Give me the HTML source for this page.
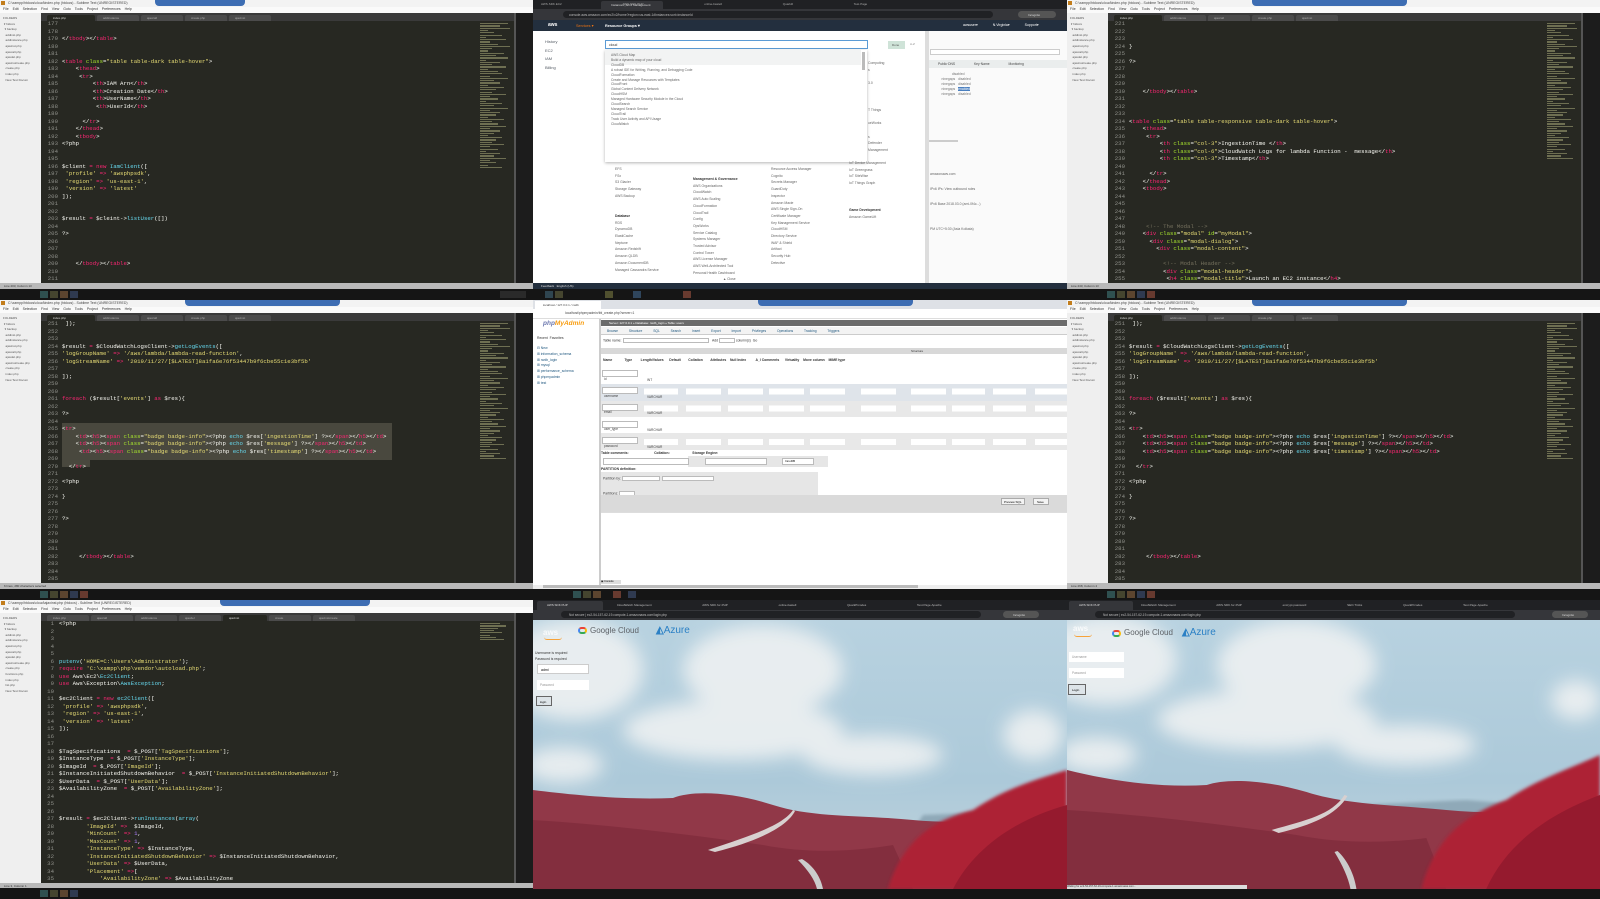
<!DOCTYPE html>
<html><head><meta charset="utf-8"><style>
*{margin:0;padding:0;box-sizing:border-box}
body{width:1600px;height:899px;background:#111;overflow:hidden;position:relative;font-family:"Liberation Sans",sans-serif}
.cell{position:absolute;overflow:hidden;background:#272822}
.a{position:absolute}
.tb{left:0;top:0;right:0;height:7px;background:#f3f3f3;font-size:3.5px;color:#444;padding:1px 0 0 8px}
.tb .ic{position:absolute;left:1px;top:1px;width:4px;height:4px;background:#c27d1c}
.blue{top:0;height:6px;background:#3d6db3;border-radius:0 0 4px 4px}
.mn{left:0;top:7px;right:0;height:6px;background:#fafafa;font-size:3.5px;color:#333;padding-left:3px;word-spacing:3px}
.sb{left:0;top:13px;width:41px;height:270px;background:#efefef;font-size:3px;color:#555;padding:3px 0 0 3px;line-height:5.6px;white-space:pre}
.tabs{left:41px;top:13px;right:0;height:8px;background:#3a3a3a}
.tab{position:absolute;top:2px;height:6px;background:#4b4b4b;border-radius:2px 2px 0 0;font-size:3px;color:#aaa;padding:1px 0 0 6px}
.tab.on{background:#272822;color:#ddd}
.gut{left:41px;top:20px;width:17px;font:5.7px/7.5px "Liberation Mono",monospace;color:#8f908a;text-align:right;white-space:pre}
.code{left:62px;top:20px;font:5.7px/7.5px "Liberation Mono",monospace;color:#f8f8f2;white-space:pre}
.mm{left:480px;top:22px;width:32px;height:255px;opacity:.55}
.mm i{display:block;height:1.2px;margin:1.1px 0;background:#a9a97a}
.rb{left:514px;top:13px;width:19px;height:277px;background:#1c1c1c;border-left:2px solid #555}
.st{left:0;top:283px;right:0;height:6px;background:#b9b9b9;font-size:3px;color:#333;padding:1px 0 0 4px}
.task{left:0;top:289px;right:0;height:11px;background:#151515}
.task b{position:absolute;top:2px;width:8px;height:7px;opacity:.7}
.k{color:#f92672}.s{color:#e6db74}.f{color:#66d9ef}.g{color:#a6e22e}.c{color:#75715e}.n{color:#ae81ff}
.t4{font-size:3.4px;color:#555;white-space:pre;line-height:5px}
</style></head><body>

<!-- R1C1 editor -->
<div class="cell" style="left:0;top:0;width:533px;height:300px">
<div class="a tb"><span class="ic"></span>C:\xampp\htdocs\cloud\index.php (htdocs) - Sublime Text (UNREGISTERED)</div>
<div class="a blue" style="left:155px;width:90px"></div>
<div class="a mn">File Edit Selection Find View Goto Tools Project Preferences Help</div>
<div class="a sb">FOLDERS
 ▾ htdocs
  ▾ backup
   addinst.php
   addinstance.php
   ajaxinst.php
   ajaxcall.php
   ajaxdel.php
   ajaxinstcreate.php
   create.php
   index.php
   New Text Docum</div>
<div class="a tabs"><div class="tab on" style="left:6px;width:48px">index.php</div><div class="tab" style="left:56px;width:42px">addinstance</div><div class="tab" style="left:100px;width:42px">ajaxcall</div><div class="tab" style="left:144px;width:42px">create.php</div><div class="tab" style="left:188px;width:42px">ajaxinst</div></div>
<div class="a gut">177
178
179
180
181
182
183
184
185
186
187
188
189
190
191
192
193
194
195
196
197
198
199
200
201
202
203
204
205
206
207
208
209
210
211</div>
<div class="a code">

&lt;/<span class="k">tbody</span>&gt;&lt;/<span class="k">table</span>&gt;


&lt;<span class="k">table</span> <span class="g">class</span>=<span class="s">"table table-dark table-hover"</span>&gt;
    &lt;<span class="k">thead</span>&gt;
     &lt;<span class="k">tr</span>&gt;
         &lt;<span class="k">th</span>&gt;IAM Arn&lt;/<span class="k">th</span>&gt;
         &lt;<span class="k">th</span>&gt;Creation Date&lt;/<span class="k">th</span>&gt;
         &lt;<span class="k">th</span>&gt;UserName&lt;/<span class="k">th</span>&gt;
          &lt;<span class="k">th</span>&gt;UserId&lt;/<span class="k">th</span>&gt;

      &lt;/<span class="k">tr</span>&gt;
    &lt;/<span class="k">thead</span>&gt;
    &lt;<span class="k">tbody</span>&gt;
&lt;?php


$client <span class="k">=</span> <span class="k">new</span> <span class="f">IamClient</span>([
 <span class="s">'profile'</span> <span class="k">=&gt;</span> <span class="s">'awsphpsdk'</span>,
 <span class="s">'region'</span> <span class="k">=&gt;</span> <span class="s">'us-east-1'</span>,
 <span class="s">'version'</span> <span class="k">=&gt;</span> <span class="s">'latest'</span>
]);


$result <span class="k">=</span> $cleint-&gt;<span class="f">listUser</span>([])

?&gt;



    &lt;/<span class="k">tbody</span>&gt;&lt;/<span class="k">table</span>&gt;</div>
<div class="a mm"><i style="width:28px"></i><i style="width:20px"></i><i style="width:30px"></i><i style="width:8px"></i><i style="width:14px"></i><i style="width:22px"></i><i style="width:6px"></i><i style="width:26px"></i><i style="width:10px"></i><i style="width:18px"></i><i style="width:30px"></i><i style="width:12px"></i><i style="width:8px"></i><i style="width:24px"></i><i style="width:16px"></i><i style="width:28px"></i><i style="width:6px"></i><i style="width:20px"></i><i style="width:12px"></i><i style="width:26px"></i><i style="width:8px"></i><i style="width:18px"></i><i style="width:22px"></i><i style="width:10px"></i><i style="width:28px"></i><i style="width:14px"></i><i style="width:20px"></i><i style="width:8px"></i><i style="width:24px"></i><i style="width:16px"></i><i style="width:12px"></i><i style="width:26px"></i><i style="width:10px"></i><i style="width:18px"></i><i style="width:6px"></i><i style="width:22px"></i><i style="width:14px"></i><i style="width:28px"></i><i style="width:10px"></i><i style="width:20px"></i><i style="width:16px"></i><i style="width:8px"></i><i style="width:24px"></i><i style="width:12px"></i><i style="width:18px"></i><i style="width:26px"></i><i style="width:10px"></i><i style="width:20px"></i><i style="width:14px"></i><i style="width:8px"></i><i style="width:22px"></i><i style="width:16px"></i><i style="width:12px"></i><i style="width:24px"></i><i style="width:10px"></i><i style="width:18px"></i><i style="width:6px"></i><i style="width:20px"></i><i style="width:14px"></i><i style="width:26px"></i><i style="width:10px"></i><i style="width:16px"></i><i style="width:8px"></i><i style="width:22px"></i></div>
<div class="a rb"></div>
<div class="a st">Line 203, Column 13</div>
<div class="a task"><b style="left:40px;background:#3a6a6a"></b><b style="left:50px;background:#5a5a3a"></b><b style="left:60px;background:#7a5a3a"></b><b style="left:70px;background:#3a4a6a"></b><b style="left:500px;width:26px;background:#333"></b></div>
</div>

<!-- R1C2 AWS console -->
<div class="cell" style="left:533px;top:0;width:534px;height:300px;background:#fff">
<div class="a" style="left:0;top:0;right:0;height:9px;background:#202124"></div>
<div class="a" style="left:68px;top:1px;width:62px;height:8px;background:#35363a;border-radius:2px 2px 0 0;font-size:3px;color:#ddd;padding:2px 0 0 10px">Instances | EC2 Management</div>
<div class="a" style="left:8px;top:2px;font-size:3px;color:#aaa;word-spacing:60px">AWS·SDK·EC2 AWS·SDK·PHP online-bastell Quarkill Test·Page</div>
<div class="a" style="left:0;top:9px;right:0;height:11px;background:#35363a"></div>
<div class="a" style="left:30px;top:11px;width:430px;height:7px;background:#202124;border-radius:4px;font-size:3.3px;color:#bbb;padding:2px 0 0 6px">console.aws.amazon.com/ec2/v2/home?region=us-east-1#Instances:sort=instanceId</div>
<div class="a" style="left:485px;top:11px;width:38px;height:7px;background:#555;border-radius:4px;font-size:3px;color:#ddd;padding:2px 0 0 10px">Incognito</div>
<div class="a" style="left:0;top:20px;right:0;height:11px;background:#232f3e"></div>
<div class="a" style="left:15px;top:22px;font-size:5px;font-weight:bold;color:#fff">aws</div>
<div class="a" style="left:43px;top:23px;font-size:3.8px;color:#ec7211">Services ▾</div>
<div class="a" style="left:72px;top:23px;font-size:3.8px;color:#fff;font-weight:bold">Resource Groups ▾</div>
<div class="a" style="left:430px;top:23px;font-size:3.5px;color:#fff;word-spacing:14px">awsuser▾ N.Virginia▾ Support▾</div>
<div class="a" style="left:395px;top:31px;width:139px;height:252px;background:#fafafa"></div>
<div class="a" style="left:397px;top:49px;width:130px;height:6px;border:1px solid #ccc;background:#fff"></div>
<div class="a" style="left:395px;top:60px;width:139px;height:8px;background:#eaeded;font-size:3.3px;color:#444;padding:2px 0 0 10px;word-spacing:18px">Public·DNS Key·Name Monitoring</div>
<div class="a t4" style="left:400px;top:72px;color:#777">                    disabled
         ninegaps   disabled
         ninegaps   disabled
         ninegaps   <span style="background:#4a7fbf;color:#fff">enabled</span>
         ninegaps   disabled</div>
<div class="a" style="left:395px;top:140px;width:30px;height:2px;background:#ccc"></div>
<div class="a t4" style="left:397px;top:172px;color:#666">amazonaws.com


IPv6 IPs: View outbound rules


IPv6 Base 2018.03.0 (ami-0f4c...)




PM UTC+5:30 (Asia Kolkata)</div>
<div class="a" style="left:392px;top:31px;width:4px;height:252px;background:#ddd"></div>
<div class="a" style="left:0;top:31px;width:392px;height:252px;background:#fff"></div>
<div class="a t4" style="left:12px;top:38px;font-size:4px;line-height:8.5px;color:#545b64">History
EC2
IAM
Billing</div>
<div class="a" style="left:72px;top:40px;width:263px;height:9px;border:1px solid #5b9bd5;background:#fff;font-size:3.5px;color:#333;padding:2px 0 0 3px">cloud</div>
<div class="a" style="left:355px;top:41px;width:17px;height:8px;background:#cfe3d8;font-size:3px;color:#555;padding:2px 0 0 4px">Done</div>
<div class="a" style="left:377px;top:42px;font-size:3px;color:#888">A-Z</div>
<div class="a" style="left:72px;top:50px;width:262px;height:112px;background:#fff;box-shadow:0 1px 3px rgba(0,0,0,.3)"></div>
<div class="a" style="left:72px;top:50px;width:256px;height:15px;background:#f2f3f3"></div>
<div class="a" style="left:329px;top:52px;width:3px;height:18px;background:#bbb"></div>
<div class="a t4" style="left:78px;top:53px;line-height:4.9px;font-size:3.3px;color:#666">AWS Cloud Map
Build a dynamic map of your cloud
CloudDB
A robust IDE for Writing, Running, and Debugging Code
CloudFormation
Create and Manage Resources with Templates
CloudFront
Global Content Delivery Network
CloudHSM
Managed Hardware Security Module in the Cloud
CloudSearch
Managed Search Service
CloudTrail
Track User Activity and API Usage
CloudWatch</div>
<div class="a t4" style="left:335px;top:60px;line-height:6.7px;color:#666">Computing
s

3.0



T Things

ueWorks

s
Defender
Management</div>
<div class="a t4" style="left:82px;top:166px;line-height:6.7px;color:#666">EFS
FSx
S3 Glacier
Storage Gateway
AWS Backup


<b style="color:#333">Database</b>
RDS
DynamoDB
ElastiCache
Neptune
Amazon Redshift
Amazon QLDB
Amazon DocumentDB
Managed Cassandra Service</div>
<div class="a t4" style="left:160px;top:176px;line-height:6.7px;color:#666"><b style="color:#333">Management &amp; Governance</b>
AWS Organizations
CloudWatch
AWS Auto Scaling
CloudFormation
CloudTrail
Config
OpsWorks
Service Catalog
Systems Manager
Trusted Advisor
Control Tower
AWS License Manager
AWS Well-Architected Tool
Personal Health Dashboard</div>
<div class="a t4" style="left:238px;top:166px;line-height:6.7px;color:#666">Resource Access Manager
Cognito
Secrets Manager
GuardDuty
Inspector
Amazon Macie
AWS Single Sign-On
Certificate Manager
Key Management Service
CloudHSM
Directory Service
WAF &amp; Shield
Artifact
Security Hub
Detective</div>
<div class="a t4" style="left:316px;top:160px;line-height:6.7px;color:#666">IoT Device Management
IoT Greengrass
IoT SiteWise
IoT Things Graph



<b style="color:#333">Game Development</b>
Amazon GameLift</div>
<div class="a" style="left:190px;top:277px;font-size:3.3px;color:#666">▲ Close</div>
<div class="a" style="left:0;top:283px;right:0;height:7px;background:#232f3e;font-size:3px;color:#ddd;padding:1px 0 0 8px">Feedback &nbsp; English (US)</div>
<div class="a task"><b style="left:12px;background:#3a5a6a"></b><b style="left:22px;background:#5a5a3a"></b><b style="left:72px;background:#6a6a3a"></b><b style="left:100px;background:#3a5a7a"></b><b style="left:150px;background:#8a4a3a"></b></div>
</div>

<!-- R1C3 editor -->
<div class="cell" style="left:1067px;top:0;width:533px;height:300px">
<div class="a tb"><span class="ic"></span>C:\xampp\htdocs\cloud\index.php (htdocs) - Sublime Text (UNREGISTERED)</div>
<div class="a blue" style="left:185px;width:155px"></div>
<div class="a mn">File Edit Selection Find View Goto Tools Project Preferences Help</div>
<div class="a sb">FOLDERS
 ▾ htdocs
  ▾ backup
   addinst.php
   addinstance.php
   ajaxinst.php
   ajaxcall.php
   ajaxdel.php
   ajaxinstcreate.php
   create.php
   index.php
   New Text Docum</div>
<div class="a tabs"><div class="tab on" style="left:6px;width:48px">index.php</div><div class="tab" style="left:56px;width:42px">addinstance</div><div class="tab" style="left:100px;width:42px">ajaxcall</div><div class="tab" style="left:144px;width:42px">create.php</div><div class="tab" style="left:188px;width:42px">ajaxinst</div></div>
<div class="a gut">221
222
223
224
225
226
227
228
229
230
231
232
233
234
235
236
237
238
239
240
241
242
243
244
245
246
247
248
249
250
251
252
253
254
255</div>
<div class="a code">


}

?&gt;



    &lt;/<span class="k">tbody</span>&gt;&lt;/<span class="k">table</span>&gt;



&lt;<span class="k">table</span> <span class="g">class</span>=<span class="s">"table table-responsive table-dark table-hover"</span>&gt;
    &lt;<span class="k">thead</span>&gt;
     &lt;<span class="k">tr</span>&gt;
         &lt;<span class="k">th</span> <span class="g">class</span>=<span class="s">"col-3"</span>&gt;IngestionTime &lt;/<span class="k">th</span>&gt;
         &lt;<span class="k">th</span> <span class="g">class</span>=<span class="s">"col-6"</span>&gt;CloudWatch Logs for lambda Function -  message&lt;/<span class="k">th</span>&gt;
         &lt;<span class="k">th</span> <span class="g">class</span>=<span class="s">"col-3"</span>&gt;Timestamp&lt;/<span class="k">th</span>&gt;

      &lt;/<span class="k">tr</span>&gt;
    &lt;/<span class="k">thead</span>&gt;
    &lt;<span class="k">tbody</span>&gt;




     <span class="c">&lt;!-- The Modal --&gt;</span>
    &lt;<span class="k">div</span> <span class="g">class</span>=<span class="s">"modal"</span> <span class="g">id</span>=<span class="s">"myModal"</span>&gt;
      &lt;<span class="k">div</span> <span class="g">class</span>=<span class="s">"modal-dialog"</span>&gt;
        &lt;<span class="k">div</span> <span class="g">class</span>=<span class="s">"modal-content"</span>&gt;

          <span class="c">&lt;!-- Modal Header --&gt;</span>
          &lt;<span class="k">div</span> <span class="g">class</span>=<span class="s">"modal-header"</span>&gt;
           &lt;<span class="k">h4</span> <span class="g">class</span>=<span class="s">"modal-title"</span>&gt;Launch an EC2 instance&lt;/<span class="k">h4</span>&gt;</div>
<div class="a mm"><i style="width:28px"></i><i style="width:20px"></i><i style="width:30px"></i><i style="width:8px"></i><i style="width:14px"></i><i style="width:22px"></i><i style="width:6px"></i><i style="width:26px"></i><i style="width:10px"></i><i style="width:18px"></i><i style="width:30px"></i><i style="width:12px"></i><i style="width:8px"></i><i style="width:24px"></i><i style="width:16px"></i><i style="width:28px"></i><i style="width:6px"></i><i style="width:20px"></i><i style="width:12px"></i><i style="width:26px"></i><i style="width:8px"></i><i style="width:18px"></i><i style="width:22px"></i><i style="width:10px"></i><i style="width:28px"></i><i style="width:14px"></i><i style="width:20px"></i><i style="width:8px"></i><i style="width:24px"></i><i style="width:16px"></i><i style="width:12px"></i><i style="width:26px"></i><i style="width:10px"></i><i style="width:18px"></i><i style="width:6px"></i><i style="width:22px"></i><i style="width:14px"></i><i style="width:28px"></i><i style="width:10px"></i><i style="width:20px"></i><i style="width:16px"></i><i style="width:8px"></i><i style="width:24px"></i><i style="width:12px"></i><i style="width:18px"></i><i style="width:26px"></i><i style="width:10px"></i><i style="width:20px"></i><i style="width:14px"></i><i style="width:8px"></i><i style="width:22px"></i><i style="width:16px"></i><i style="width:12px"></i><i style="width:24px"></i><i style="width:10px"></i><i style="width:18px"></i><i style="width:6px"></i><i style="width:20px"></i><i style="width:14px"></i><i style="width:26px"></i></div>
<div class="a rb"></div>
<div class="a st">Line 243, Column 13</div>
<div class="a task"><b style="left:40px;background:#3a6a6a"></b><b style="left:50px;background:#5a5a3a"></b><b style="left:60px;background:#7a5a3a"></b><b style="left:70px;background:#3a4a6a"></b><b style="left:80px;background:#8a4a3a"></b></div>
</div>

<!-- R2C1 editor -->
<div class="cell" style="left:0;top:300px;width:533px;height:300px">
<div class="a tb"><span class="ic"></span>C:\xampp\htdocs\cloud\index.php (htdocs) - Sublime Text (UNREGISTERED)</div>
<div class="a blue" style="left:185px;width:155px"></div>
<div class="a mn">File Edit Selection Find View Goto Tools Project Preferences Help</div>
<div class="a sb">FOLDERS
 ▾ htdocs
  ▾ backup
   addinst.php
   addinstance.php
   ajaxinst.php
   ajaxcall.php
   ajaxdel.php
   ajaxinstcreate.php
   create.php
   index.php
   New Text Docum</div>
<div class="a tabs"><div class="tab on" style="left:6px;width:48px">index.php</div><div class="tab" style="left:56px;width:42px">addinstance</div><div class="tab" style="left:100px;width:42px">ajaxcall</div><div class="tab" style="left:144px;width:42px">create.php</div><div class="tab" style="left:188px;width:42px">ajaxinst</div></div>
<div class="a" style="left:62px;top:123px;width:330px;height:37px;background:#49483e"></div>
<div class="a" style="left:62px;top:160px;width:28px;height:7px;background:#49483e"></div>
<div class="a gut">251
252
253
254
255
256
257
258
259
260
261
262
263
264
265
266
267
268
269
270
271
272
273
274
275
276
277
278
279
280
281
282
283
284
285</div>
<div class="a code"> ]);


$result <span class="k">=</span> $CloudWatchLogsClient-&gt;<span class="f">getLogEvents</span>([
<span class="s">'logGroupName'</span> <span class="k">=&gt;</span> <span class="s">'/aws/lambda/lambda-read-function'</span>,
<span class="s">'logStreamName'</span> <span class="k">=&gt;</span> <span class="s">'2019/11/27/[$LATEST]8a1fa6e76f53447b9f6cbe55c1e3bf5b'</span>

]);


<span class="k">foreach</span> ($result[<span class="s">'events'</span>] <span class="k">as</span> $res){

?&gt;

&lt;<span class="k">tr</span>&gt;
    &lt;<span class="k">td</span>&gt;&lt;<span class="k">h5</span>&gt;&lt;<span class="k">span</span> <span class="g">class</span>=<span class="s">"badge badge-info"</span>&gt;&lt;?php <span class="f">echo</span> $res[<span class="s">'ingestionTime'</span>] ?&gt;&lt;/<span class="k">span</span>&gt;&lt;/<span class="k">h5</span>&gt;&lt;/<span class="k">td</span>&gt;
    &lt;<span class="k">td</span>&gt;&lt;<span class="k">h5</span>&gt;&lt;<span class="k">span</span> <span class="g">class</span>=<span class="s">"badge badge-info"</span>&gt;&lt;?php <span class="f">echo</span> $res[<span class="s">'message'</span>] ?&gt;&lt;/<span class="k">span</span>&gt;&lt;/<span class="k">h5</span>&gt;&lt;/<span class="k">td</span>&gt;
     &lt;<span class="k">td</span>&gt;&lt;<span class="k">h5</span>&gt;&lt;<span class="k">span</span> <span class="g">class</span>=<span class="s">"badge badge-info"</span>&gt;&lt;?php <span class="f">echo</span> $res[<span class="s">'timestamp'</span>] ?&gt;&lt;/<span class="k">span</span>&gt;&lt;/<span class="k">h5</span>&gt;&lt;/<span class="k">td</span>&gt;

  &lt;/<span class="k">tr</span>&gt;

&lt;?php

}


?&gt;




     &lt;/<span class="k">tbody</span>&gt;&lt;/<span class="k">table</span>&gt;</div>
<div class="a mm"><i style="width:28px"></i><i style="width:20px"></i><i style="width:30px"></i><i style="width:8px"></i><i style="width:14px"></i><i style="width:22px"></i><i style="width:6px"></i><i style="width:26px"></i><i style="width:10px"></i><i style="width:18px"></i><i style="width:30px"></i><i style="width:12px"></i><i style="width:8px"></i><i style="width:24px"></i><i style="width:16px"></i><i style="width:28px"></i><i style="width:6px"></i><i style="width:20px"></i><i style="width:12px"></i><i style="width:26px"></i><i style="width:8px"></i><i style="width:18px"></i><i style="width:22px"></i><i style="width:10px"></i><i style="width:28px"></i><i style="width:14px"></i><i style="width:20px"></i><i style="width:8px"></i><i style="width:24px"></i><i style="width:16px"></i><i style="width:12px"></i><i style="width:26px"></i><i style="width:10px"></i><i style="width:18px"></i><i style="width:6px"></i><i style="width:22px"></i><i style="width:14px"></i><i style="width:28px"></i><i style="width:10px"></i><i style="width:20px"></i><i style="width:16px"></i><i style="width:8px"></i><i style="width:24px"></i><i style="width:12px"></i><i style="width:18px"></i><i style="width:26px"></i><i style="width:10px"></i><i style="width:20px"></i><i style="width:14px"></i><i style="width:8px"></i><i style="width:22px"></i><i style="width:16px"></i><i style="width:12px"></i><i style="width:24px"></i><i style="width:10px"></i><i style="width:18px"></i><i style="width:6px"></i><i style="width:20px"></i><i style="width:14px"></i><i style="width:26px"></i></div>
<div class="a rb"></div>
<div class="a st">6 lines, 280 characters selected</div>
<div class="a task"><b style="left:40px;background:#3a6a6a"></b><b style="left:50px;background:#5a5a3a"></b><b style="left:60px;background:#7a5a3a"></b><b style="left:70px;background:#3a4a6a"></b><b style="left:80px;background:#8a4a3a"></b></div>
</div>

<!-- R2C2 phpMyAdmin -->
<div class="cell" style="left:533px;top:300px;width:534px;height:300px;background:#fff">
<div class="a" style="left:0;top:0;right:0;height:9px;background:#dee1e6"></div>
<div class="a" style="left:2px;top:1px;width:66px;height:8px;background:#fff;font-size:3px;color:#444;padding:2px 0 0 8px">localhost / 127.0.0.1 / rwdb</div>
<div class="a blue" style="left:225px;width:155px"></div>
<div class="a" style="left:0;top:9px;right:0;height:10px;background:#fff;border-bottom:1px solid #ddd"></div>
<div class="a" style="left:32px;top:11px;width:470px;height:6px;font-size:3.3px;color:#444">localhost/phpmyadmin/tbl_create.php?server=1</div>
<div class="a" style="left:10px;top:20px;font-size:6.5px;font-style:italic;font-weight:bold;color:#6c78af">php<span style="color:#f89c0e">MyAdmin</span></div>
<div class="a t4" style="left:4px;top:36px;color:#333">Recent  Favorites</div>
<div class="a t4" style="left:4px;top:46px;line-height:5.8px;color:#235a81">⊟ New
⊞ information_schema
⊞ rwdb_login
⊞ mysql
⊞ performance_schema
⊞ phpmyadmin
⊞ test</div>
<div class="a" style="left:66px;top:19px;width:2px;height:270px;background:#ccc"></div>
<div class="a" style="left:68px;top:20px;right:0;height:6px;background:#6b6b6b;font-size:3px;color:#fff;padding:1px 0 0 8px">Server: 127.0.0.1 » Database: rwdb_login » Table: users</div>
<div class="a" style="left:68px;top:27px;right:0;height:8px;background:#f3f3f3;border-bottom:1px solid #ccc;font-size:3.3px;color:#235a81;padding:2px 0 0 6px;word-spacing:10px">Browse Structure SQL Search Insert Export Import Privileges Operations Tracking Triggers</div>
<div class="a t4" style="left:70px;top:38px;color:#333">Table name:  <span style="display:inline-block;width:86px;height:5px;border:1px solid #bbb;vertical-align:middle"></span>   Add <span style="display:inline-block;width:16px;height:5px;border:1px solid #bbb;vertical-align:middle"></span> column(s)  Go</div>
<div class="a" style="left:68px;top:48px;right:0;height:6px;background:#d8d8d8;font-size:3px;color:#333;padding:1px 0 0 310px">Structure</div>
<div class="a t4" style="left:70px;top:58px;font-weight:bold;color:#333">Name             Type         Length/Values      Default        Collation        Attributes    Null Index          A_I Comments      Virtuality    Move column    MIME type</div>
<div class="a" style="left:68px;top:67px;right:0;height:17px;background:#fff"></div>
<div class="a" style="left:68px;top:84px;right:0;height:17px;background:#dfe4ea"></div>
<div class="a" style="left:68px;top:101px;right:0;height:16px;background:#e8e8e8"></div>
<div class="a" style="left:68px;top:117px;right:0;height:16px;background:#fff"></div>
<div class="a" style="left:68px;top:133px;right:0;height:17px;background:#e8e8e8"></div>
<div class="a" style="left:69px;top:70px;width:36px;height:7px;border:1px solid #bbb;background:#fff"></div>
<div class="a" style="left:69px;top:87px;width:36px;height:7px;border:1px solid #bbb;background:#fff"></div>
<div class="a" style="left:69px;top:104px;width:36px;height:7px;border:1px solid #bbb;background:#fff"></div>
<div class="a" style="left:69px;top:121px;width:36px;height:7px;border:1px solid #bbb;background:#fff"></div>
<div class="a" style="left:69px;top:137px;width:36px;height:7px;border:1px solid #bbb;background:#fff"></div>
<div class="a" style="left:111px;top:72px;width:34px;height:78px;background:repeating-linear-gradient(#fff 0 6px,transparent 6px 16.7px)"></div>
<div class="a" style="left:153px;top:72px;width:35px;height:78px;background:repeating-linear-gradient(#fff 0 6px,transparent 6px 16.7px)"></div>
<div class="a" style="left:195px;top:72px;width:35px;height:78px;background:repeating-linear-gradient(#fff 0 6px,transparent 6px 16.7px)"></div>
<div class="a" style="left:236px;top:72px;width:35px;height:78px;background:repeating-linear-gradient(#fff 0 6px,transparent 6px 16.7px)"></div>
<div class="a" style="left:277px;top:72px;width:35px;height:78px;background:repeating-linear-gradient(#fff 0 6px,transparent 6px 16.7px)"></div>
<div class="a" style="left:328px;top:72px;width:35px;height:78px;background:repeating-linear-gradient(#fff 0 6px,transparent 6px 16.7px)"></div>
<div class="a" style="left:378px;top:72px;width:35px;height:78px;background:repeating-linear-gradient(#fff 0 6px,transparent 6px 16.7px)"></div>
<div class="a" style="left:419px;top:72px;width:33px;height:78px;background:repeating-linear-gradient(#fff 0 6px,transparent 6px 16.7px)"></div>
<div class="a" style="left:460px;top:72px;width:33px;height:78px;background:repeating-linear-gradient(#fff 0 6px,transparent 6px 16.7px)"></div>
<div class="a" style="left:502px;top:72px;width:32px;height:78px;background:repeating-linear-gradient(#fff 0 6px,transparent 6px 16.7px)"></div>
<div class="a t4" style="left:114px;top:72px;line-height:16.7px;font-size:3.2px;color:#444">INT
VARCHAR
VARCHAR
VARCHAR
VARCHAR</div>
<div class="a t4" style="left:71px;top:71px;line-height:16.7px;font-size:3.2px;color:#444">id
username
email
user_type
password</div>
<div class="a t4" style="left:68px;top:151px;font-weight:bold;color:#333">Table comments:                           Collation:                        Storage Engine:</div>
<div class="a" style="left:155px;top:156px;width:140px;height:11px;background:#e6e6e6"></div>
<div class="a" style="left:70px;top:158px;width:86px;height:7px;border:1px solid #bbb;background:#fff"></div>
<div class="a" style="left:172px;top:158px;width:62px;height:7px;border:1px solid #bbb;background:#fff"></div>
<div class="a" style="left:249px;top:158px;width:32px;height:7px;border:1px solid #bbb;background:#fff;font-size:3px;padding-left:2px">InnoDB</div>
<div class="a t4" style="left:68px;top:167px;font-weight:bold;color:#333">PARTITION definition:</div>
<div class="a" style="left:68px;top:172px;width:217px;height:23px;background:#e6e6e6"></div>
<div class="a t4" style="left:70px;top:176px;color:#444">Partition by: <span style="display:inline-block;width:38px;height:5px;border:1px solid #bbb;background:#fff;vertical-align:middle"></span>  <span style="display:inline-block;width:52px;height:5px;border:1px solid #bbb;background:#fff;vertical-align:middle"></span>


Partitions: <span style="display:inline-block;width:16px;height:5px;border:1px solid #bbb;background:#fff;vertical-align:middle"></span></div>
<div class="a" style="left:68px;top:195px;right:0;height:17px;background:#dadada"></div>
<div class="a" style="left:468px;top:198px;width:24px;height:7px;background:#f3f3f3;border:1px solid #aaa;font-size:3px;padding:1px 0 0 2px">Preview SQL</div>
<div class="a" style="left:500px;top:198px;width:16px;height:7px;background:#f3f3f3;border:1px solid #aaa;font-size:3px;padding:1px 0 0 3px">Save</div>
<div class="a" style="left:68px;top:212px;right:0;height:1px;background:#ddd"></div>
<div class="a" style="left:68px;top:280px;width:20px;height:4px;background:#ddd;font-size:2.6px">▣ Console</div>
<div class="a" style="left:0;top:285px;right:0;height:4px;background:#eee"></div>
<div class="a" style="left:10px;top:285px;width:375px;height:3px;background:#bbb"></div>
<div class="a task"><b style="left:40px;background:#3a6a6a"></b><b style="left:50px;background:#5a5a3a"></b><b style="left:60px;background:#7a5a3a"></b><b style="left:80px;background:#8a4a3a"></b><b style="left:95px;background:#3a4a6a"></b></div>
</div>

<!-- R2C3 editor -->
<div class="cell" style="left:1067px;top:300px;width:533px;height:300px">
<div class="a tb"><span class="ic"></span>C:\xampp\htdocs\cloud\index.php (htdocs) - Sublime Text (UNREGISTERED)</div>
<div class="a blue" style="left:185px;width:155px"></div>
<div class="a mn">File Edit Selection Find View Goto Tools Project Preferences Help</div>
<div class="a sb">FOLDERS
 ▾ htdocs
  ▾ backup
   addinst.php
   addinstance.php
   ajaxinst.php
   ajaxcall.php
   ajaxdel.php
   ajaxinstcreate.php
   create.php
   index.php
   New Text Docum</div>
<div class="a tabs"><div class="tab on" style="left:6px;width:48px">index.php</div><div class="tab" style="left:56px;width:42px">addinstance</div><div class="tab" style="left:100px;width:42px">ajaxcall</div><div class="tab" style="left:144px;width:42px">create.php</div><div class="tab" style="left:188px;width:42px">ajaxinst</div></div>
<div class="a gut">251
252
253
254
255
256
257
258
259
260
261
262
263
264
265
266
267
268
269
270
271
272
273
274
275
276
277
278
279
280
281
282
283
284
285</div>
<div class="a code"> ]);


$result <span class="k">=</span> $CloudWatchLogsClient-&gt;<span class="f">getLogEvents</span>([
<span class="s">'logGroupName'</span> <span class="k">=&gt;</span> <span class="s">'/aws/lambda/lambda-read-function'</span>,
<span class="s">'logStreamName'</span> <span class="k">=&gt;</span> <span class="s">'2019/11/27/[$LATEST]8a1fa6e76f53447b9f6cbe55c1e3bf5b'</span>

]);


<span class="k">foreach</span> ($result[<span class="s">'events'</span>] <span class="k">as</span> $res){

?&gt;

&lt;<span class="k">tr</span>&gt;
    &lt;<span class="k">td</span>&gt;&lt;<span class="k">h5</span>&gt;&lt;<span class="k">span</span> <span class="g">class</span>=<span class="s">"badge badge-info"</span>&gt;&lt;?php <span class="f">echo</span> $res[<span class="s">'ingestionTime'</span>] ?&gt;&lt;/<span class="k">span</span>&gt;&lt;/<span class="k">h5</span>&gt;&lt;/<span class="k">td</span>&gt;
    &lt;<span class="k">td</span>&gt;&lt;<span class="k">h5</span>&gt;&lt;<span class="k">span</span> <span class="g">class</span>=<span class="s">"badge badge-info"</span>&gt;&lt;?php <span class="f">echo</span> $res[<span class="s">'message'</span>] ?&gt;&lt;/<span class="k">span</span>&gt;&lt;/<span class="k">h5</span>&gt;&lt;/<span class="k">td</span>&gt;
    &lt;<span class="k">td</span>&gt;&lt;<span class="k">h5</span>&gt;&lt;<span class="k">span</span> <span class="g">class</span>=<span class="s">"badge badge-info"</span>&gt;&lt;?php <span class="f">echo</span> $res[<span class="s">'timestamp'</span>] ?&gt;&lt;/<span class="k">span</span>&gt;&lt;/<span class="k">h5</span>&gt;&lt;/<span class="k">td</span>&gt;

  &lt;/<span class="k">tr</span>&gt;

&lt;?php

}


?&gt;




     &lt;/<span class="k">tbody</span>&gt;&lt;/<span class="k">table</span>&gt;</div>
<div class="a mm"><i style="width:28px"></i><i style="width:20px"></i><i style="width:30px"></i><i style="width:8px"></i><i style="width:14px"></i><i style="width:22px"></i><i style="width:6px"></i><i style="width:26px"></i><i style="width:10px"></i><i style="width:18px"></i><i style="width:30px"></i><i style="width:12px"></i><i style="width:8px"></i><i style="width:24px"></i><i style="width:16px"></i><i style="width:28px"></i><i style="width:6px"></i><i style="width:20px"></i><i style="width:12px"></i><i style="width:26px"></i><i style="width:8px"></i><i style="width:18px"></i><i style="width:22px"></i><i style="width:10px"></i><i style="width:28px"></i><i style="width:14px"></i><i style="width:20px"></i><i style="width:8px"></i><i style="width:24px"></i><i style="width:16px"></i><i style="width:12px"></i><i style="width:26px"></i><i style="width:10px"></i><i style="width:18px"></i><i style="width:6px"></i><i style="width:22px"></i><i style="width:14px"></i><i style="width:28px"></i><i style="width:10px"></i><i style="width:20px"></i><i style="width:16px"></i><i style="width:8px"></i><i style="width:24px"></i><i style="width:12px"></i><i style="width:18px"></i><i style="width:26px"></i><i style="width:10px"></i><i style="width:20px"></i><i style="width:14px"></i><i style="width:8px"></i><i style="width:22px"></i><i style="width:16px"></i><i style="width:12px"></i><i style="width:24px"></i><i style="width:10px"></i><i style="width:18px"></i><i style="width:6px"></i><i style="width:20px"></i><i style="width:14px"></i><i style="width:26px"></i></div>
<div class="a rb"></div>
<div class="a st">Line 268, Column 4</div>
<div class="a task"><b style="left:40px;background:#3a6a6a"></b><b style="left:50px;background:#5a5a3a"></b><b style="left:60px;background:#7a5a3a"></b><b style="left:70px;background:#3a4a6a"></b><b style="left:80px;background:#8a4a3a"></b></div>
</div>

<!-- R3C1 editor -->
<div class="cell" style="left:0;top:600px;width:533px;height:299px">
<div class="a tb"><span class="ic"></span>C:\xampp\htdocs\cloud\ajaxinst.php (htdocs) - Sublime Text (UNREGISTERED)</div>
<div class="a blue" style="left:220px;width:150px"></div>
<div class="a mn">File Edit Selection Find View Goto Tools Project Preferences Help</div>
<div class="a sb">FOLDERS
 ▾ htdocs
  ▾ backup
   addinst.php
   addinstance.php
   ajaxinst.php
   ajaxcall.php
   ajaxdel.php
   ajaxinstcreate.php
   create.php
   functions.php
   index.php
   list.php
   New Text Docum</div>
<div class="a tabs"><div class="tab" style="left:6px;width:42px">index.php</div><div class="tab" style="left:50px;width:42px">ajaxcall</div><div class="tab" style="left:94px;width:42px">addinstance</div><div class="tab" style="left:138px;width:42px">ajaxdel</div><div class="tab on" style="left:182px;width:44px">ajaxinst</div><div class="tab" style="left:228px;width:42px">create</div><div class="tab" style="left:272px;width:42px">ajaxinstcreate</div></div>
<div class="a gut" style="width:13px">1
2
3
4
5
6
7
8
9
10
11
12
13
14
15
16
17
18
19
20
21
22
23
24
25
26
27
28
29
30
31
32
33
34
35</div>
<div class="a code" style="left:59px">&lt;?php




<span class="f">putenv</span>(<span class="s">'HOME=C:\Users\Administrator'</span>);
<span class="k">require</span> <span class="s">'C:\xampp\php\vendor\autoload.php'</span>;
<span class="k">use</span> Aws\Ec2\<span class="f">Ec2Client</span>;
<span class="k">use</span> Aws\Exception\<span class="f">AwsException</span>;

$ec2Client <span class="k">=</span> <span class="k">new</span> <span class="f">ec2Client</span>([
 <span class="s">'profile'</span> <span class="k">=&gt;</span> <span class="s">'awsphpsdk'</span>,
 <span class="s">'region'</span> <span class="k">=&gt;</span> <span class="s">'us-east-1'</span>,
 <span class="s">'version'</span> <span class="k">=&gt;</span> <span class="s">'latest'</span>
]);


$TagSpecifications  <span class="k">=</span> $_POST[<span class="s">'TagSpecifications'</span>];
$InstanceType  <span class="k">=</span> $_POST[<span class="s">'InstanceType'</span>];
$ImageId  <span class="k">=</span> $_POST[<span class="s">'ImageId'</span>];
$InstanceInitiatedShutdownBehavior  <span class="k">=</span> $_POST[<span class="s">'InstanceInitiatedShutdownBehavior'</span>];
$UserData  <span class="k">=</span> $_POST[<span class="s">'UserData'</span>];
$AvailabilityZone  <span class="k">=</span> $_POST[<span class="s">'AvailabilityZone'</span>];



$result <span class="k">=</span> $ec2Client-&gt;<span class="f">runInstances</span>(<span class="f">array</span>(
        <span class="s">'ImageId'</span> <span class="k">=&gt;</span>  $ImageId,
        <span class="s">'MinCount'</span> <span class="k">=&gt;</span> <span class="n">1</span>,
        <span class="s">'MaxCount'</span> <span class="k">=&gt;</span> <span class="n">1</span>,
        <span class="s">'InstanceType'</span> <span class="k">=&gt;</span> $InstanceType,
        <span class="s">'InstanceInitiatedShutdownBehavior'</span> <span class="k">=&gt;</span> $InstanceInitiatedShutdownBehavior,
        <span class="s">'UserData'</span> <span class="k">=&gt;</span> $UserData,
        <span class="s">'Placement'</span> <span class="k">=&gt;</span>[
            <span class="s">'AvailabilityZone'</span> <span class="k">=&gt;</span> $AvailabilityZone</div>
<div class="a mm" style="height:30px"><i style="width:20px"></i><i style="width:26px"></i><i style="width:18px"></i><i style="width:14px"></i><i style="width:22px"></i><i style="width:10px"></i><i style="width:16px"></i><i style="width:24px"></i></div>
<div class="a rb"></div>
<div class="a st">Line 3, Column 1</div>
<div class="a task" style="top:288px"><b style="left:40px;background:#3a6a6a"></b><b style="left:50px;background:#5a5a3a"></b><b style="left:60px;background:#7a5a3a"></b><b style="left:70px;background:#3a4a6a"></b></div>
</div>

<!-- Login cells -->
<div class="cell" style="left:533px;top:600px;width:534px;height:299px;background:#202124">
<div class="a" style="left:0;top:0;right:0;height:10px;background:#202124;font-size:3px;color:#bbb;padding:3px 0 0 12px;word-spacing:50px">AWS·SDK·PHP CloudWatch·Management AWS·SDK·for·PHP online-bastell QuarkPrcodes Test·Page·Apache</div>
<div class="a" style="left:4px;top:1px;width:66px;height:9px;background:#35363a;border-radius:2px 2px 0 0;font-size:3px;color:#ddd;padding:2px 0 0 10px">AWS SDK PHP</div>
<div class="a" style="left:0;top:10px;right:0;height:10px;background:#35363a"></div>
<div class="a" style="left:28px;top:11px;width:420px;height:7px;background:#202124;border-radius:4px;font-size:3.2px;color:#bbb;padding:2px 0 0 8px">Not secure | ec2-54-157-62-19.compute-1.amazonaws.com/login.php</div>
<div class="a" style="left:470px;top:11px;width:36px;height:7px;background:#555;border-radius:4px;font-size:3px;color:#ddd;padding:2px 0 0 10px">Incognito</div>
<svg class="a" style="left:0;top:20px" width="534" height="269" viewBox="0 0 534 269" preserveAspectRatio="none">
<defs><linearGradient id="sk" x1="0" y1="0" x2="0" y2="1"><stop offset="0" stop-color="#b8d2e0"/><stop offset=".6" stop-color="#acc9d9"/><stop offset="1" stop-color="#c5d6dd"/></linearGradient>
<filter id="bl" x="-50%" y="-50%" width="200%" height="200%"><feGaussianBlur stdDeviation="9"/></filter><filter id="bl2"><feGaussianBlur stdDeviation="1.5"/></filter></defs>
<rect width="534" height="269" fill="url(#sk)"/>
<g filter="url(#bl)" fill="#eef1f2" opacity=".9"><ellipse cx="40" cy="50" rx="70" ry="50"/><ellipse cx="230" cy="50" rx="80" ry="45"/><ellipse cx="200" cy="110" rx="110" ry="30"/><ellipse cx="340" cy="135" rx="70" ry="20"/><ellipse cx="30" cy="145" rx="40" ry="18"/><ellipse cx="500" cy="115" rx="30" ry="25"/></g>
<path d="M390 195 L460 192 L534 196 L534 210 L380 210Z" fill="#8fa9b8" filter="url(#bl2)"/>
<path d="M0 170 C40 175 90 180 140 178 C160 170 200 172 240 185 C280 198 330 195 380 200 C430 205 480 198 534 200 L534 269 L0 269Z" fill="#913848"/>
<path d="M0 200 C80 205 160 215 230 225 C280 235 330 230 360 225 L380 269 L0 269Z" fill="#7f2c3c" opacity=".8"/>
<path d="M175 230 C220 215 250 205 260 190 L262 191 C255 205 230 220 182 232Z" fill="#d8d0d0"/>
<path d="M265 240 C275 250 282 260 284 269 L290 269 C288 258 281 246 269 239Z" fill="#ccc"/>
<path d="M355 269 C370 220 400 200 440 190 C470 170 500 160 534 150 L534 269Z" fill="#ad2136" filter="url(#bl2)"/>
<path d="M420 269 C440 230 480 200 534 185 L534 269Z" fill="#951a2e"/>
</svg>
<div class="a" style="left:10px;top:28px;font-size:8px;font-weight:bold;color:#fff;opacity:.8">aws</div>
<div class="a" style="left:11px;top:37px;width:18px;height:3px;border-bottom:1.5px solid #f7a33a;border-radius:0 0 10px 10px"></div>
<div class="a" style="left:45px;top:27px;width:9px;height:7px;border:2px solid;border-color:#ea4335 #fbbc04 #34a853 #4285f4;border-radius:5px"></div>
<div class="a" style="left:57px;top:26px;font-size:8px;color:#5f6368">Google Cloud</div>
<div class="a" style="left:123px;top:25px;font-size:10px;color:#2b80c5;font-weight:bold">◭<span style="font-weight:normal">Azure</span></div>
<div class="a t4" style="left:2px;top:50px;color:#333;font-size:3.4px;line-height:6px">Username is required
Password is required</div>
<div class="a" style="left:4px;top:64px;width:52px;height:10px;background:#fff;border:1px solid #ccc;font-size:3.5px;padding:3px 0 0 3px">admi</div>
<div class="a" style="left:4px;top:80px;width:52px;height:10px;background:#fff;font-size:3.2px;color:#999;padding:3px 0 0 3px">Password</div>
<div class="a" style="left:3px;top:96px;width:16px;height:10px;border:1px solid #666;background:#dde4e8;font-size:3px;padding:3px 0 0 3px">login</div>
<div class="a" style="left:0;top:289px;right:0;height:10px;background:#151515"></div>
</div>

<div class="cell" style="left:1067px;top:600px;width:533px;height:299px;background:#202124">
<div class="a" style="left:0;top:0;right:0;height:10px;background:#202124;font-size:3px;color:#bbb;padding:3px 0 0 12px;word-spacing:40px">AWS·SDK·PHP CloudWatch·Management AWS·SDK·for·PHP encrypt·password SEO·Tricks QuarkPrcodes Test·Page·Apache</div>
<div class="a" style="left:2px;top:1px;width:64px;height:9px;background:#35363a;border-radius:2px 2px 0 0;font-size:3px;color:#ddd;padding:2px 0 0 10px">AWS SDK PHP</div>
<div class="a" style="left:0;top:10px;right:0;height:10px;background:#35363a"></div>
<div class="a" style="left:28px;top:11px;width:420px;height:7px;background:#202124;border-radius:4px;font-size:3.2px;color:#bbb;padding:2px 0 0 8px">Not secure | ec2-54-157-62-19.compute-1.amazonaws.com/login.php</div>
<div class="a" style="left:485px;top:11px;width:36px;height:7px;background:#555;border-radius:4px;font-size:3px;color:#ddd;padding:2px 0 0 10px">Incognito</div>
<svg class="a" style="left:0;top:20px" width="533" height="269" viewBox="0 0 534 269" preserveAspectRatio="none">
<rect width="534" height="269" fill="url(#sk)"/>
<g filter="url(#bl)" fill="#eef1f2" opacity=".9"><ellipse cx="40" cy="40" rx="70" ry="45"/><ellipse cx="230" cy="45" rx="80" ry="45"/><ellipse cx="200" cy="100" rx="110" ry="30"/><ellipse cx="340" cy="125" rx="70" ry="20"/><ellipse cx="30" cy="135" rx="40" ry="18"/><ellipse cx="510" cy="80" rx="25" ry="20"/></g>
<path d="M290 185 L400 180 L460 185 L460 200 L290 200Z" fill="#8fa9b8" filter="url(#bl2)"/>
<path d="M0 150 C40 160 90 168 140 165 C160 158 200 160 240 172 C280 185 330 185 380 190 C430 195 480 190 534 192 L534 269 L0 269Z" fill="#913848"/>
<path d="M0 190 C80 195 160 205 230 215 C280 225 330 222 360 218 L380 269 L0 269Z" fill="#7f2c3c" opacity=".8"/>
<path d="M205 210 C240 200 265 195 278 175 L281 176 C270 195 245 205 212 213Z" fill="#d8d0d0"/>
<path d="M268 232 C276 245 282 258 284 269 L290 269 C288 255 281 240 271 231Z" fill="#ccc"/>
<path d="M355 269 C370 215 400 195 440 180 C470 160 500 150 534 135 L534 269Z" fill="#ad2136" filter="url(#bl2)"/>
<path d="M420 269 C440 225 480 195 534 175 L534 269Z" fill="#951a2e"/>
</svg>
<div class="a" style="left:6px;top:24px;font-size:8px;font-weight:bold;color:#fff;opacity:.8">aws</div>
<div class="a" style="left:7px;top:34px;width:18px;height:3px;border-bottom:1.5px solid #f7a33a;border-radius:0 0 10px 10px"></div>
<div class="a" style="left:45px;top:30px;width:9px;height:7px;border:2px solid;border-color:#ea4335 #fbbc04 #34a853 #4285f4;border-radius:5px"></div>
<div class="a" style="left:57px;top:28px;font-size:8px;color:#5f6368">Google Cloud</div>
<div class="a" style="left:115px;top:27px;font-size:10px;color:#2b80c5;font-weight:bold">◭<span style="font-weight:normal">Azure</span></div>
<div class="a" style="left:2px;top:52px;width:55px;height:10px;background:#fff;font-size:3.2px;color:#999;padding:3px 0 0 3px">Username</div>
<div class="a" style="left:2px;top:68px;width:55px;height:10px;background:#fff;font-size:3.2px;color:#999;padding:3px 0 0 3px">Password</div>
<div class="a" style="left:1px;top:84px;width:18px;height:11px;border:1px solid #666;background:#dde4e8;font-size:3px;padding:3px 0 0 3px">Login</div>
<div class="a" style="left:0;top:285px;width:180px;height:4px;background:#dcdcdc;font-size:2.6px;color:#333">Waiting for ec2-54-157-62-19.compute-1.amazonaws.com...</div>
<div class="a" style="left:0;top:289px;right:0;height:10px;background:#151515"></div>
</div>
</body></html>
